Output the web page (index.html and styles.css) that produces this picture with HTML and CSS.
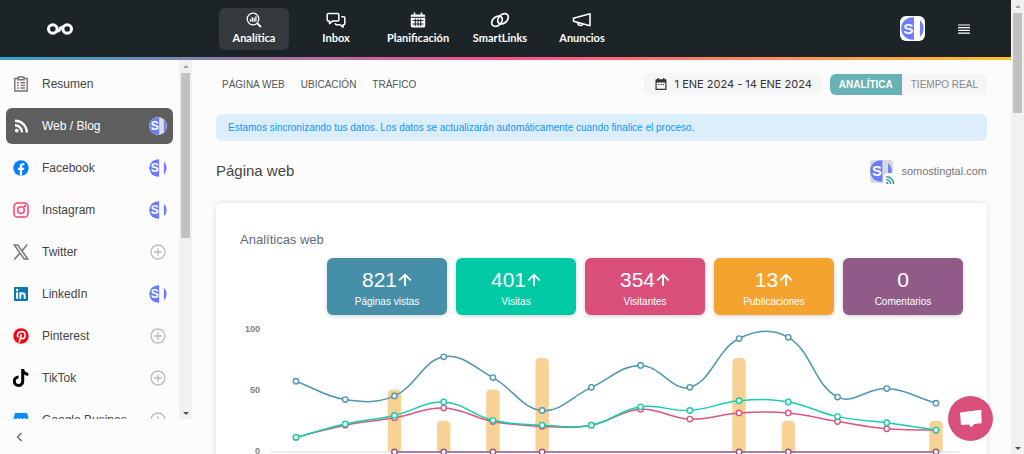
FILE: index.html
```html
<!DOCTYPE html>
<html lang="es">
<head>
<meta charset="utf-8">
<title>Analítica web</title>
<link rel="stylesheet" href="styles.css">
</head>
<body>
<svg class="defs" aria-hidden="true">
  <symbol id="brand" viewBox="0 0 24 24">
    <path fill="#6b7dff" d="M13.500.3A11.800 11.800 0 1 0 13.500 23.700z"/>
    <path fill="#6b7dff" d="M19.800 3.200Q23.600 7 23.600 12t-3.800 8.800z"/>
    <text class="brand-letter" x="7.600" y="17.500" text-anchor="middle">S</text>
  </symbol>
  <symbol id="plus" viewBox="0 0 16 16">
    <g fill="none" stroke="#b9b9b9" stroke-width="1.3"><circle cx="8" cy="8" r="7"/><path d="M8 4.2v7.6M4.2 8h7.6"/></g>
  </symbol>
  <symbol id="rss" viewBox="0 0 16 16">
    <circle cx="3.8" cy="12.6" r="1.9" fill="currentColor"/>
    <path fill="none" stroke="currentColor" stroke-width="2.4" d="M2 7.2a7 7 0 0 1 7 7.2M2 2.8a11.6 11.6 0 0 1 11.8 11.6"/>
  </symbol>
  <symbol id="up" viewBox="0 0 14 14">
    <path fill="none" stroke="currentColor" stroke-width="1.9" d="M7 13V2M1.2 7.400 7 1.800l5.800 5.600"/>
  </symbol>
</svg>
<div class="app">
  <div class="page">
    <header class="topbar">
      <a class="logo" href="#" aria-label="Inicio">
        <svg width="28" height="14" viewBox="0 0 28 14"><g fill="none" stroke="#fff" stroke-width="3"><circle cx="6.8" cy="7" r="4.3"/><circle cx="21.2" cy="7" r="4.3"/><path d="M10.5 9.4Q14 8.5 14 7t3.500-2.400"/></g></svg>
      </a>
      <nav class="main-nav">
        <button class="nav-item active">
          <svg width="18" height="18" viewBox="0 0 18 18" fill="none" stroke="#fff"><circle cx="8" cy="8" r="5.800" stroke-width="1.300"/><path stroke-width="1.900" d="m12.300 12.300 3.700 3.700"/><path stroke-width="1.300" d="M5.500 10.800V8M7.300 10.800V6M9.100 10.800V7M10.900 10.400V5.300"/></svg>
          Analítica</button>
        <button class="nav-item">
          <svg width="20" height="18" viewBox="0 0 20 18" fill="none" stroke="#fff" stroke-width="1.500" stroke-linejoin="round"><path d="M2.200 2.500h9.600q1 0 1 1v5.600q0 1-1 1H6.500l-3 2.500v-2.500H2.200q-1 0-1-1V3.500q0-1 1-1z"/><path d="M15.300 5.800h2.500q1 0 1 1v6q0 1-1 1h-.8v2.500l-2.900-2.500h-3.700q-1 0-1-1v-.6"/></svg>
          Inbox</button>
        <button class="nav-item">
          <svg width="16" height="18" viewBox="0 0 16 18"><path fill="#fff" d="M2 3.500h1.700V1.600h1.600v1.900h5.400V1.600h1.600v1.900H14q1.200 0 1.200 1.200V15q0 1.500-1.500 1.500H2.300Q.8 16.500.8 15V4.700Q.8 3.500 2 3.500z"/><path stroke="#1c2427" stroke-width="1" d="M1 6.300h14M2.500 9.600h11M2.500 13h11M5.300 7.500v7.500M8 7.500v7.500M10.700 7.500v7.500"/></svg>
          Planificación</button>
        <button class="nav-item">
          <svg width="20" height="18" viewBox="0 0 20 18" fill="none" stroke="#fff" stroke-width="1.700"><ellipse cx="7" cy="10.200" rx="6" ry="4.300" transform="rotate(-42 7 10.200)"/><ellipse cx="13" cy="7.800" rx="6" ry="4.300" transform="rotate(-42 13 7.800)"/></svg>
          SmartLinks</button>
        <button class="nav-item">
          <svg width="20" height="18" viewBox="0 0 20 18" fill="none" stroke="#fff" stroke-width="1.600" stroke-linejoin="round"><path d="M1.500 6.500v4.300M1.500 7.200 18 2.800v12L1.500 10.200M5.600 11.300q.2 3.400 3.200 3.200 2-.2 2.300-1.800"/></svg>
          Anuncios</button>
      </nav>
      <div class="account">
        <button class="avatar" aria-label="Cuenta"><svg width="23" height="23"><use href="#brand"/></svg></button>
        <button class="menu" aria-label="Menú"><svg width="12" height="10" viewBox="0 0 12 10"><path stroke="#fff" stroke-width="1.200" d="M0 1h12M0 3.700h12M0 6.400h12M0 9.100h12"/></svg></button>
      </div>
    </header>
    <div class="body">
      <aside class="sidebar">
        <div class="side-scroll">
          <nav class="side-list">
            <a class="side-item" href="#"><svg class="net" viewBox="0 0 16 16" fill="none" stroke="#7b6f76" stroke-width="1.400"><path d="M5 2.500H1.800V15h12.400V2.500H11M5 1.200h1.600q1.400-1.600 2.800 0H11v2.600H5z"/><path d="M4 6.700h1.800M7.500 6.700H12M4 9.400h1.800M7.500 9.400H12M4 12h1.800M7.500 12H12"/></svg><span>Resumen</span></a>
            <a class="side-item active" href="#"><svg class="net"><use href="#rss"/></svg><span>Web / Blog</span><svg class="badge on"><use href="#brand"/></svg></a>
            <a class="side-item" href="#"><svg class="net" viewBox="0 0 16 16"><circle cx="8" cy="8" r="7.700" fill="#0a7cff"/><path fill="#fff" d="M6.800 15.600V10H4.900V7.800h1.900V6.200c0-2 1.200-3 2.900-3l1.700.1v1.900h-1c-1 0-1.300.5-1.300 1.200v1.400h2.200L10.900 10H9.100v5.600z"/></svg><span>Facebook</span><svg class="badge"><use href="#brand"/></svg></a>
            <a class="side-item" href="#"><svg class="net" viewBox="0 0 16 16" fill="none" stroke="#ff3d6a" stroke-width="1.500"><rect x="1" y="1" width="14" height="14" rx="3.600"/><circle cx="8" cy="8" r="3.300"/><circle cx="12" cy="4" r=".4"/></svg><span>Instagram</span><svg class="badge"><use href="#brand"/></svg></a>
            <a class="side-item" href="#"><svg class="net" viewBox="0 0 16 16" fill="none" stroke="#777"><path stroke-width="1.500" d="M1.300 1h3.500l9.900 14h-3.500z"/><path stroke-width="1.600" d="M14.300.6 9 6.900M6.900 9.200 1.200 15.500"/></svg><span>Twitter</span><svg class="badge add"><use href="#plus"/></svg></a>
            <a class="side-item" href="#"><svg class="net" viewBox="0 0 16 16"><rect x="1" y="1" width="14" height="14" rx="1" fill="#0a77b5"/><path fill="none" stroke="#fff" stroke-width="2" d="M4.100 6.300v6.500M7.300 6.300v6.500M7.300 9.500q0-2.300 2.200-2.300t2.200 2.300v3.300"/><circle cx="4.100" cy="4" r="1.200" fill="#fff"/></svg><span>LinkedIn</span><svg class="badge"><use href="#brand"/></svg></a>
            <a class="side-item" href="#"><svg class="net" viewBox="0 0 16 16"><circle cx="8" cy="8" r="7.700" fill="#fb0010"/><path fill="none" stroke="#fff" stroke-width="1.700" d="M5.200 9.300C3.700 7.200 4.700 3.600 8.300 3.600c2.300 0 3.700 1.500 3.700 3.300 0 2.100-1.200 3.700-2.700 3.700-1 0-1.700-.7-1.500-1.600M8.200 6.400 6.100 14.600"/></svg><span>Pinterest</span><svg class="badge add"><use href="#plus"/></svg></a>
            <a class="side-item" href="#"><svg class="net tiktok" viewBox="0 0 16 18"><path fill="none" stroke="#000" stroke-width="3" d="M9.700 0v12.400a4.200 4.200 0 1 1-4.200-4.300M9.700.6q.8 4.400 5.600 4.800"/></svg><span>TikTok</span><svg class="badge add"><use href="#plus"/></svg></a>
            <a class="side-item" href="#"><svg class="net" viewBox="0 0 16 16"><path fill="#0a8cff" d="M2 1h12l1.300 4v10H.7V5z"/><path fill="none" stroke="#fff" d="M1 7q1.800 1.800 3.500-.5 1.700 2.300 3.500 0 1.700 2.300 3.500 0Q13.200 8.800 15 7"/></svg><span>Google Busines</span><svg class="badge add"><use href="#plus"/></svg></a>
          </nav>
          <div class="scrollbar"><i class="arrow-up"></i><i class="thumb side-thumb"></i><i class="arrow-down"></i></div>
        </div>
        <button class="collapse" aria-label="Contraer"><svg width="7" height="10" viewBox="0 0 7 10"><path fill="none" stroke="#666" stroke-width="1.400" d="M5.500 1 1.500 5l4 4"/></svg></button>
      </aside>
      <main class="content">
        <div class="toolbar">
          <nav class="sections"><a href="#">PÁGINA WEB</a><a href="#">UBICACIÓN</a><a href="#">TRÁFICO</a></nav>
          <button class="dates"><svg width="12" height="12" viewBox="0 0 12 12"><path fill="none" stroke="#333" stroke-width="1.200" d="M1.100 2h9.800v9.300H1.100z"/><path fill="#333" d="M1 1.600h10V4.500H1zM2.500 0h1.400v2H2.500zM8.100 0h1.400v2H8.100zM3 5.900h1.300v1.200H3zM5.400 5.900h1.300v1.200H5.400zM7.800 5.900h1.300v1.200H7.800z"/></svg>1 ENE 2024 - 14 ENE 2024</button>
          <div class="mode"><button class="on">ANALÍTICA</button><button>TIEMPO REAL</button></div>
        </div>
        <p class="notice">Estamos sincronizando tus datos. Los datos se actualizarán automáticamente cuando finalice el proceso.</p>
        <div class="heading">
          <h1>Página web</h1>
          <div class="site"><span class="site-logo"><svg width="22" height="22"><use href="#brand"/></svg><i class="site-badge"><svg width="10" height="10"><use href="#rss"/></svg></i></span>somostingtal.com</div>
        </div>
        <section class="card">
          <h2>Analíticas web</h2>
          <div class="stats">
            <div class="stat blue"><strong>821<svg width="14" height="14"><use href="#up"/></svg></strong><span>Páginas vistas</span></div>
            <div class="stat teal"><strong>401<svg width="14" height="14"><use href="#up"/></svg></strong><span>Visitas</span></div>
            <div class="stat pink"><strong>354<svg width="14" height="14"><use href="#up"/></svg></strong><span>Visitantes</span></div>
            <div class="stat orange"><strong>13<svg width="14" height="14"><use href="#up"/></svg></strong><span>Publicaciones</span></div>
            <div class="stat purple"><strong>0</strong><span>Comentarios</span></div>
          </div>
          <svg class="chart" id="chart" viewBox="0 0 723 160" role="img" aria-label="Evolución diaria"></svg>
        </section>
      </main>
    </div>
  </div>
  <div class="scrollbar"><i class="arrow-up"></i><i class="thumb page-thumb"></i><i class="arrow-down"></i></div>
</div>
<button class="chat" aria-label="Chat"><svg width="24" height="20" viewBox="0 0 24 20"><path fill="#fff" d="M1 3.500 22.300.8l.4 13.400-7.500.8-2.800 3.500-2.700-2.900-7.700.4z"/></svg></button>
<script src="chart.js"></script>
</body>
</html>
```
FILE: styles.css
```css
* { box-sizing: border-box; }
body { margin: 0; font-family: "Liberation Sans", Arial, sans-serif; color: #444; background: #fcfcfc; }
button { border: 0; background: none; padding: 0; font-family: inherit; color: inherit; cursor: pointer; }
a { color: inherit; text-decoration: none; }
h1, h2, p { margin: 0; font-weight: 400; }
svg { flex: none; }
.defs { display: none; }
.brand-letter { font: bold 16px "Liberation Sans", Arial, sans-serif; fill: #fff; }

.app { display: flex; height: 100vh; overflow: hidden; }
.page { flex: 1; min-width: 0; display: flex; flex-direction: column; }

.topbar { display: flex; align-items: center; height: 60px; flex: none; padding: 0 41px 0 46px; background: #1c2427; border-bottom: 3px solid; border-image: linear-gradient(90deg, #31a5c5, #ff4f8b 50%, #ffc12e) 1; }
.logo { width: 173px; display: flex; }
.main-nav { display: flex; gap: 12px; flex: 1; }
.nav-item { display: flex; flex-direction: column; align-items: center; justify-content: center; gap: 1px; width: 70px; height: 42px; border-radius: 6px; color: #fff; font: 700 11px/16px Lato, "Open Sans", sans-serif; white-space: nowrap; }
.nav-item.active { background: #34393d; }
.account { display: flex; align-items: center; gap: 33px; }
.avatar { display: flex; align-items: center; justify-content: center; width: 25px; height: 25px; background: #fff; border-radius: 6px; }
.menu { display: flex; }

.body { display: flex; flex: 1; min-height: 0; }
.sidebar { width: 192px; flex: none; display: flex; flex-direction: column; }
.side-scroll { flex: 1; min-height: 0; display: flex; overflow: hidden; }
.side-list { flex: 1; display: flex; flex-direction: column; gap: 6px; padding: 6px; overflow: hidden; }
.side-item { display: flex; align-items: center; flex: none; height: 36px; padding: 0 6px 0 7px; border-radius: 6px; font-size: 12px; }
.side-item span { flex: 1; margin-left: 13px; white-space: nowrap; }
.side-item.active { background: #5e5e5e; color: #fff; }
.net { width: 16px; height: 16px; }
.tiktok { height: 18px; }
.badge { width: 18px; height: 18px; border-radius: 50%; }
.badge.on { background: #dcdde3; }
.badge.add { width: 16px; height: 16px; margin-right: 1px; }
.collapse { display: flex; align-items: center; height: 35px; padding-left: 16px; }

.scrollbar { width: 13px; flex: none; display: flex; flex-direction: column; align-items: center; background: #f1f1f1; }
.scrollbar i { flex: none; }
.arrow-up, .arrow-down { border: 3px solid transparent; margin: 2px 0 5px; }
.arrow-up { border-bottom-color: #a3a3a3; }
.arrow-down { border-top-color: #505050; margin: auto 0 1px; }
.thumb { width: 9px; background: #c1c1c1; }
.side-thumb { height: 46%; }
.page-thumb { height: 22%; }

.content { flex: 1; min-width: 0; padding: 13px 24px 0; overflow: hidden; }
.toolbar { display: flex; align-items: center; gap: 7px; height: 22px; }
.sections { display: flex; gap: 16px; flex: 1; padding-left: 6px; font-size: 10px; color: #555; }
.dates { display: flex; align-items: center; gap: 8px; height: 22px; padding: 0 11px; border-radius: 6px; background: #f5f5f5; font: 11px Inter, sans-serif; color: #333; }
.mode { display: flex; border-radius: 6px; overflow: hidden; background: #f5f5f5; }
.mode button { height: 21px; padding: 0 9px; font-size: 10px; color: #888; }
.mode .on { background: #66b2b5; color: #fff; font-weight: 700; }
.notice { margin-top: 19px; padding: 0 12px; border-radius: 6px; background: #dceefb; color: #0a98ff; font-size: 10px; line-height: 27px; white-space: nowrap; overflow: hidden; }
.heading { display: flex; justify-content: space-between; align-items: center; height: 24px; margin: 18px 0 20px; }
.heading h1 { font-size: 15px; line-height: 20px; }
.site { display: flex; align-items: center; gap: 8px; font-size: 11px; color: #777; }
.site-logo { position: relative; display: flex; width: 23px; height: 23px; border-radius: 3px; background: #d8dade; }
.site-badge { position: absolute; right: -2px; bottom: -2px; display: flex; align-items: flex-end; justify-content: flex-end; width: 12px; height: 12px; border-radius: 6px 0 0 0; background: #fcfcfc; color: #3a9b9b; }
.card { padding: 28px 24px; border-radius: 6px; background: #fff; box-shadow: 0 0 6px rgba(0, 0, 0, .12); }
.card h2 { font-size: 13px; line-height: 18px; color: #5f6b7d; }
.stats { display: flex; justify-content: flex-end; gap: 9px; margin-top: 9px; }
.stat { display: flex; flex-direction: column; align-items: center; justify-content: center; gap: 2px; width: 120px; height: 57px; padding-top: 4px; border-radius: 6px; color: #fff; box-shadow: 0 1px 4px rgba(0, 0, 0, .2); }
.stat strong { display: flex; align-items: center; gap: 1px; font-size: 21px; line-height: 24px; font-weight: 400; }
.stat span { font-size: 10px; line-height: 16px; }
.blue { background: #458fa9; }
.teal { background: #00caa5; }
.pink { background: #d94f7a; }
.orange { background: #f4a42e; }
.purple { background: #915b87; }

.chart { display: block; width: 100%; }
.chart text { font: bold 9px "Liberation Sans", Arial, sans-serif; fill: #808080; text-anchor: end; }
.chat { position: fixed; right: 31px; bottom: 13px; display: flex; align-items: center; justify-content: center; width: 45px; height: 45px; border-radius: 50%; background: #d94f7a; }
```
FILE: chart.js
```js
const svg = document.getElementById("chart");
const ZERO = 137, STEP = 49.23, START = 56, UNIT = 1.22;
const px = i => START + i * STEP;
const py = v => ZERO - v * UNIT;

function add(tag, attrs, text) {
  const el = document.createElementNS("http://www.w3.org/2000/svg", tag);
  for (const key in attrs) el.setAttribute(key, attrs[key]);
  if (text) el.textContent = text;
  svg.appendChild(el);
}

function controls(a, b, c) {
  const d1 = Math.hypot(b[0] - a[0], b[1] - a[1]);
  const d2 = Math.hypot(c[0] - b[0], c[1] - b[1]);
  const sum = d1 + d2 || 1;
  const f = 0.4 * d1 / sum, g = 0.4 * d2 / sum;
  return [
    [b[0] - f * (c[0] - a[0]), b[1] - f * (c[1] - a[1])],
    [b[0] + g * (c[0] - a[0]), b[1] + g * (c[1] - a[1])]
  ];
}

function series(points, color) {
  const c = points.map((p, i) => controls(points[i - 1] || p, p, points[i + 1] || p));
  let d = "M" + points[0];
  for (let i = 1; i < points.length; i++) d += "C" + [c[i - 1][1], c[i][0], points[i]].join(" ");
  add("path", { d, fill: "none", stroke: color, "stroke-width": 1.5 });
  points.forEach(p => add("circle", { cx: p[0], cy: p[1], r: 2.7, fill: "#fff", stroke: color, "stroke-width": 1.4 }));
}

[100, 50, 0].forEach(v => add("text", { x: 20, y: py(v) + 2 }, String(v)));
add("path", { d: `M31 ${ZERO}H720`, stroke: "#e4e4e4", "stroke-width": 1.5 });

const posts = { 2: 2, 3: 1, 4: 2, 5: 3, 9: 3, 10: 1, 13: 1 };
series(Object.keys(posts).map(i => [px(+i), ZERO]), "#915b87");
series([12, 22, 28, 36, 25, 21, 22, 35, 27, 32, 32, 25, 19, 18].map((v, i) => [px(i), py(v)]), "#dc5580");
series([12, 23, 30, 41, 26, 22, 22, 37, 34, 42, 41, 29, 24, 18].map((v, i) => [px(i), py(v)]), "#16cfac");
series([58, 43, 46, 78, 61, 34, 53, 71, 53, 93, 94, 45, 52, 40].map((v, i) => [px(i), py(v)]), "#4f97b0");

for (const i in posts) {
  const h = posts[i] * 31.3, x = px(+i);
  add("path", { d: `M${x - 6.7} ${ZERO}v${-h + 5}q0-5 5-5h3.4q5 0 5 5v${h - 5}z`, fill: "#f8d194" });
  svg.insertBefore(svg.lastChild, svg.firstChild);
}
```
